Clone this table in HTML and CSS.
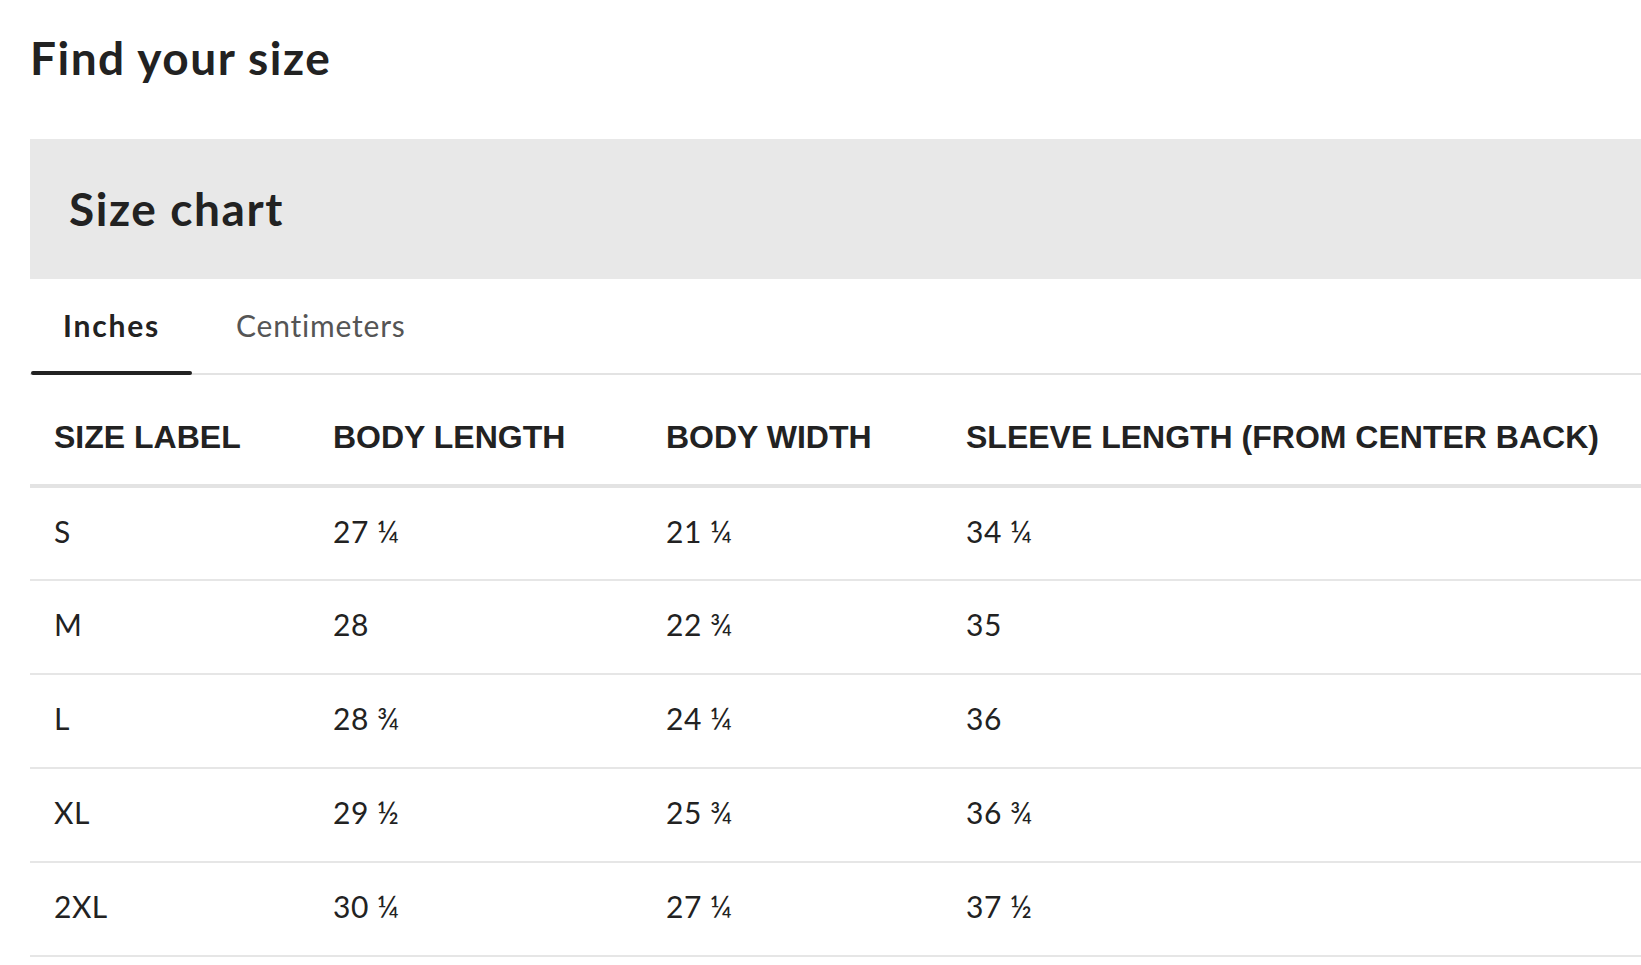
FILE: index.html
```html
<!DOCTYPE html>
<html lang="en">
<head>
<meta charset="utf-8">
<title>Find your size</title>
<link rel="stylesheet" href="styles.css">
</head>
<body>
<main class="page">
  <h1 class="title">Find your size</h1>
  <section class="chart">
    <header class="chart-head">
      <h2 class="chart-title">Size chart</h2>
    </header>
    <nav class="tabs">
      <button class="tab tab-active">Inches</button>
      <button class="tab">Centimeters</button>
    </nav>
    <table class="sizes">
      <colgroup>
        <col class="c1"><col class="c2"><col class="c3"><col class="c4">
      </colgroup>
      <thead>
        <tr>
          <th>SIZE LABEL</th>
          <th>BODY LENGTH</th>
          <th>BODY WIDTH</th>
          <th>SLEEVE LENGTH (FROM CENTER BACK)</th>
        </tr>
      </thead>
      <tbody>
        <tr><td>S</td><td>27 ¼</td><td>21 ¼</td><td>34 ¼</td></tr>
        <tr><td>M</td><td>28</td><td>22 ¾</td><td>35</td></tr>
        <tr><td>L</td><td>28 ¾</td><td>24 ¼</td><td>36</td></tr>
        <tr><td>XL</td><td>29 ½</td><td>25 ¾</td><td>36 ¾</td></tr>
        <tr><td>2XL</td><td>30 ¼</td><td>27 ¼</td><td>37 ½</td></tr>
      </tbody>
    </table>
  </section>
</main>
</body>
</html>
```
FILE: styles.css
```css
html, body {
  margin: 0;
  padding: 0;
  background: #ffffff;
  overflow: hidden;
}

body {
  font-family: "Lato", "Liberation Sans", sans-serif;
  color: #222222;
}

.page {
  padding: 35px 0 0 30px;
}

.title {
  margin: 0 0 58px 0;
  font-size: 46px;
  line-height: 46px;
  font-weight: 700;
  letter-spacing: 1.5px;
  color: #222222;
}

.chart-head {
  background: #e8e8e8;
  height: 140px;
  display: flex;
  align-items: center;
  padding-left: 39px;
}

.chart-title {
  margin: 0;
  font-size: 46px;
  line-height: 46px;
  font-weight: 700;
  letter-spacing: 1.6px;
  color: #222222;
}

.tabs {
  display: flex;
  gap: 12px;
  border-bottom: 2px solid #e3e3e3;
}

.tab {
  position: relative;
  margin: 0 0 -2px 0;
  padding: 29px 32px 33px 32px;
  border: 0;
  background: transparent;
  font-family: "Lato", "Liberation Sans", sans-serif;
  font-size: 30px;
  line-height: 34px;
  font-weight: 400;
  letter-spacing: 0.8px;
  color: #555555;
  cursor: pointer;
}

.tab-active {
  padding-left: 33px;
  font-weight: 700;
  letter-spacing: 1.8px;
  color: #222222;
}

.tab-active::after {
  content: "";
  position: absolute;
  left: 1px;
  right: 0;
  bottom: 0;
  height: 4px;
  border-radius: 2px;
  background: #222222;
}

.sizes {
  width: 100%;
  border-collapse: collapse;
  table-layout: fixed;
}

.c1 { width: 279px; }
.c2 { width: 333px; }
.c3 { width: 300px; }

.sizes th {
  text-align: left;
  font-family: "Liberation Sans", Arial, sans-serif;
  font-size: 32px;
  line-height: 32px;
  font-weight: 700;
  color: #222222;
  padding: 46px 0 31px 24px;
  border-bottom: 4px solid #e3e3e3;
  white-space: nowrap;
}

.sizes td {
  font-size: 30px;
  line-height: 32px;
  font-weight: 400;
  letter-spacing: 0.5px;
  color: #222222;
  height: 94px;
  padding: 0 0 6px 24px;
  box-sizing: border-box;
  border-bottom: 2px solid #e6e6e6;
  vertical-align: middle;
}
```
